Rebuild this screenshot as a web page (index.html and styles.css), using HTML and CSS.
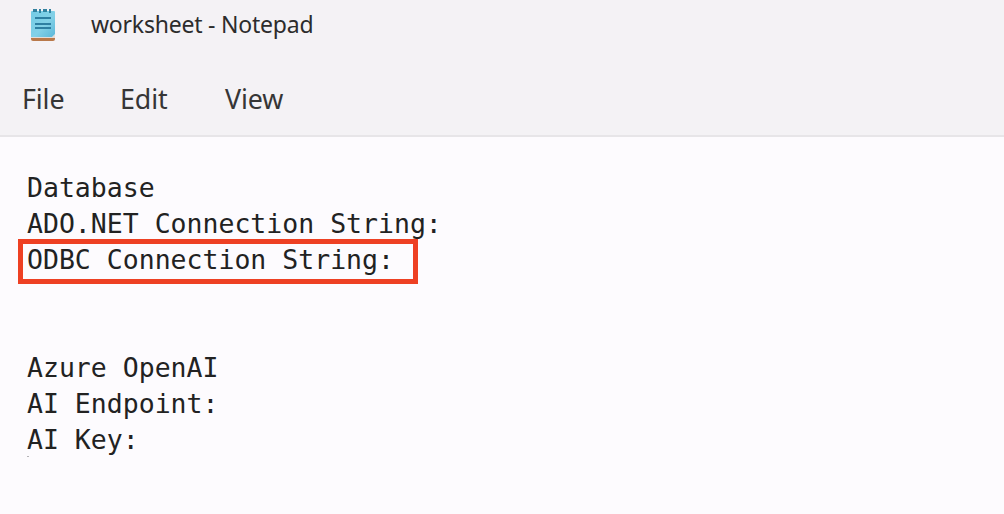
FILE: index.html
```html
<!DOCTYPE html>
<html lang="en">
<head>
<meta charset="utf-8">
<title>worksheet - Notepad</title>
<link rel="stylesheet" href="styles.css">
</head>
<body>
<header class="chrome">
  <div class="titlebar">
    <svg class="app-icon" width="26" height="34" viewBox="0 0 26 34">
      <defs><linearGradient id="page" x1="0" y1="0" x2="1" y2="1"><stop offset="0" stop-color="#73cbe5"/><stop offset=".55" stop-color="#83d1e7"/><stop offset="1" stop-color="#5bb7d9"/></linearGradient></defs>
      <path d="M1 29h24v2q0 2-2 2H3q-2 0-2-2z" fill="#b9794a"/>
      <path d="M1 29h21l3-3v4H1z" fill="#e3ddd8"/>
      <path d="M2 3h22q1 0 1 1v22l-3 3H1V4q0-1 1-1z" fill="url(#page)"/>
      <path d="M3 1h4v3H3zM9 1h2v4H9zM13 1h4v3h-4zM19 1h2v4h-2z" fill="#32819f"/>
      <path d="M5 10h16M5 16h16M5 20h16" stroke="#2e7fa2" stroke-width="2"/>
    </svg>
    <span class="title">worksheet - Notepad</span>
  </div>
  <nav class="menu"><span class="file">File</span><span class="edit">Edit</span><span class="view">View</span></nav>
</header>
<main class="editor">
  <div class="line">Database</div>
  <div class="line">ADO.NET Connection String:</div>
  <div class="line highlighted">ODBC Connection String:</div>
  <div class="line"></div>
  <div class="line"></div>
  <div class="line">Azure OpenAI</div>
  <div class="line">AI Endpoint:</div>
  <div class="line last">AI Key:</div>
  <div class="speck"></div>
</main>
</body>
</html>
```
FILE: styles.css
```css
*, *::after { box-sizing: border-box; }
body {
  margin: 0;
  height: 514px;
  overflow: hidden;
  background: #fdfbfe;
  color: #222;
  font-family: "Noto Sans", "Open Sans", sans-serif;
}
.chrome {
  height: 137px;
  background: #f4f2f5;
  border-bottom: 2px solid #e7e5e8;
}
.titlebar {
  display: flex;
  align-items: flex-start;
  height: 69px;
  padding: 8px 0 0 30px;
}
.title {
  margin-left: 35px;
  font-size: 23px;
  line-height: 32px;
  letter-spacing: -0.22px;
  color: #2c2c2c;
  white-space: nowrap;
}
.menu {
  display: flex;
  padding-left: 22px;
  font-size: 26.8px;
  line-height: 60px;
  letter-spacing: -0.1px;
  color: #363636;
}
.file { width: 98px; }
.edit { width: 105px; }
.editor {
  padding: 33px 0 0 27px;
  font-family: "DejaVu Sans Mono", monospace;
  font-size: 26.5px;
  line-height: 36px;
}
.line {
  height: 36px;
  white-space: pre;
}
.last { height: 34px; }
.highlighted { position: relative; }
.highlighted::after {
  content: "";
  position: absolute;
  left: -9px;
  top: -3px;
  width: 400px;
  height: 45px;
  border: 5px solid #ee4023;
}
.speck {
  width: 2px;
  height: 1px;
  background: #b5b3b7;
}
```
